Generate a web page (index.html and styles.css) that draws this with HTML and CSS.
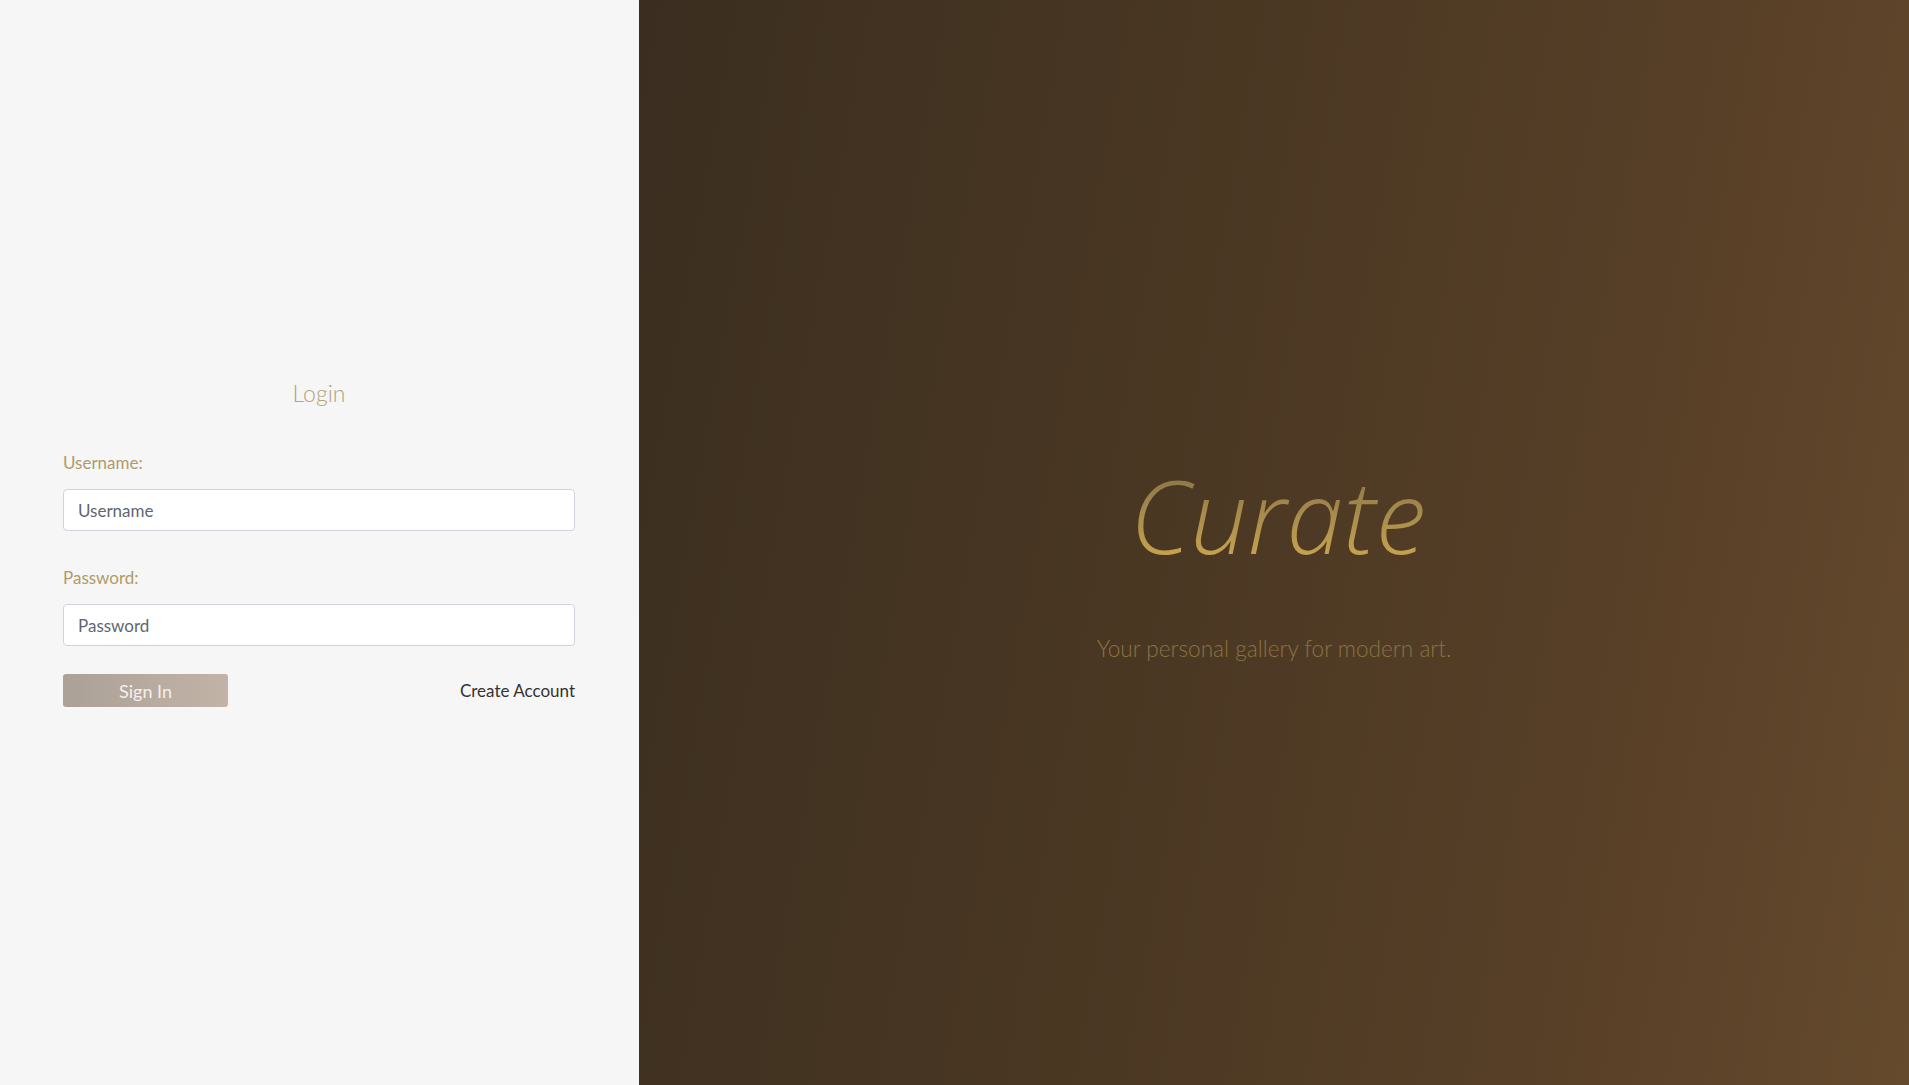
FILE: index.html
```html
<!DOCTYPE html>
<html lang="en">
<head>
<meta charset="utf-8">
<title>Curate - Login</title>
<link rel="stylesheet" href="styles.css">
</head>
<body>
<div class="page">
  <section class="left">
    <form class="login">
      <h2 class="title">Login</h2>
      <label class="label" for="u">Username:</label>
      <input class="field" id="u" type="text" placeholder="Username">
      <label class="label label-pw" for="p">Password:</label>
      <input class="field" id="p" type="password" placeholder="Password">
      <div class="actions">
        <button class="btn" type="button">Sign In</button>
        <a class="create" href="#">Create Account</a>
      </div>
    </form>
  </section>
  <section class="right">
    <div class="brand">
      <h1 class="logo">Curate</h1>
      <p class="tagline">Your personal gallery for modern art.</p>
    </div>
  </section>
</div>
</body>
</html>
```

FILE: styles.css
```css
html, body {
  margin: 0;
  padding: 0;
  height: 100%;
}
body {
  font-family: "Lato", "Open Sans", sans-serif;
}
.page {
  display: flex;
  height: 1085px;
  width: 1909px;
}
.left {
  width: 639px;
  flex: 0 0 639px;
  background: #f6f6f6;
  display: flex;
  flex-direction: column;
  padding-top: 378px;
  box-sizing: border-box;
}
.login {
  margin: 0 64px 0 63px;
  display: flex;
  flex-direction: column;
}
.title {
  margin: 0 0 45px 0;
  text-align: center;
  font-weight: 300;
  font-size: 23px;
  color: #b5a17c;
  line-height: 30px;
}
.label {
  font-size: 17px;
  color: #b09a6a;
  line-height: 20px;
  margin-bottom: 16px;
}
.label-pw {
  margin-top: 37px;
}
.field {
  box-sizing: border-box;
  height: 42px;
  width: 100%;
  border: 1px solid #cfd4dc;
  border-radius: 4px;
  background: #fff;
  padding: 0 14px;
  font-family: inherit;
  font-size: 17px;
  color: #333;
  outline: none;
}
.field::placeholder {
  color: #5f6670;
}
.actions {
  margin-top: 28px;
  display: flex;
  align-items: center;
  justify-content: space-between;
  width: 100%;
}
.btn {
  width: 165px;
  height: 33px;
  border: none;
  border-radius: 3px;
  background: linear-gradient(90deg, #aba197, #c2b3a6);
  color: #f4f0ec;
  font-family: inherit;
  font-size: 18px;
  padding: 0;
  cursor: pointer;
}
.create {
  color: #333;
  font-size: 17px;
  text-decoration: none;
}
.right {
  flex: 1;
  background: linear-gradient(100deg, #3b2e20 0%, #4b3823 45%, #5a4128 80%, #654a2d 100%);
  display: flex;
  justify-content: center;
  padding-top: 455px;
  box-sizing: border-box;
}
.brand {
  text-align: center;
}
.logo {
  margin: 0 0 0 8px;
  font-family: "Open Sans", sans-serif;
  font-style: italic;
  font-weight: 300;
  font-size: 102px;
  line-height: 120px;
  background: linear-gradient(180deg, #857249 10%, #cba650 90%);
  -webkit-background-clip: text;
  background-clip: text;
  color: transparent;
}
.tagline {
  margin: 60px 0 0 0;
  font-weight: 300;
  font-size: 22.6px;
  color: #8b7244;
}
```
